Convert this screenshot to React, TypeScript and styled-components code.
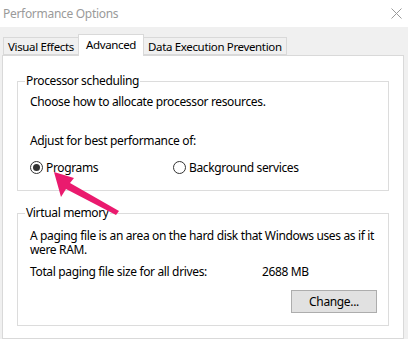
import React from "react";
import styled, { createGlobalStyle } from "styled-components";

const Global = createGlobalStyle`
  html, body { margin: 0; padding: 0; background: #f0f0f0; }
  body { font-family: "Noto Sans", "Open Sans", sans-serif; font-size: 12px; letter-spacing: -0.35px; color: #000; }
`;

const Window = styled.div`
  position: relative;
  width: 408px;
  height: 339px;
  overflow: hidden;
  background: #f0f0f0;
  display: flex;
  flex-direction: column;
`;

const TitleBar = styled.div`
  height: 27px;
  flex: none;
  background: #fff;
  display: flex;
  align-items: center;
  justify-content: space-between;
  padding: 0 6px 0 3px;
  color: #9a9a9a;
  font-size: 12px;
  letter-spacing: -0.3px;
`;

const CloseIcon = styled.svg`
  width: 11px;
  height: 11px;
`;

const TabStrip = styled.div`
  display: flex;
  align-items: flex-end;
  height: 21px;
  margin-top: 7px;
  padding-left: 3px;
  position: relative;
  z-index: 1;
`;

const Tab = styled.div<{ $active?: boolean }>`
  box-sizing: border-box;
  height: ${(p) => (p.$active ? "22px" : "18px")};
  margin-bottom: ${(p) => (p.$active ? "-1px" : "0")};
  padding: ${(p) => (p.$active ? "2px 7px 0" : "1px 4px 0 4px")};
  border: 1px solid #d9d9d9;
  border-bottom: ${(p) => (p.$active ? "none" : "1px solid #d9d9d9")};
  background: ${(p) => (p.$active ? "#fff" : "#f0f0f0")};
  margin-left: ${(p) => (p.$active ? "-1px" : "0")};
  margin-right: ${(p) => (p.$active ? "-1px" : "0")};
  position: relative;
  z-index: ${(p) => (p.$active ? 2 : 1)};
  font-size: 11.5px;
  line-height: 15px;
  white-space: nowrap;
`;

const Panel = styled.div`
  margin: 0 4px 0 2px;
  height: 320px;
  background: #fff;
  border: 1px solid #d9d9d9;
  padding: 17px 14px 0;
  display: flex;
  flex-direction: column;
  gap: 14px;
`;

const Group = styled.fieldset`
  margin: 0;
  padding: 0 12px;
  border: 1px solid #dcdcdc;
  min-width: 0;
`;

const Legend = styled.legend`
  margin-left: -5px;
  padding: 0 1px;
  line-height: 16px;
`;

const Line = styled.div<{ $mt?: number }>`
  line-height: 15px;
  margin-top: ${(p) => p.$mt ?? 0}px;
`;

const Paragraph = styled.div<{ $mt?: number }>`
  line-height: 14px;
  margin-top: ${(p) => p.$mt ?? 0}px;
`;

const RadioRow = styled.div`
  display: grid;
  grid-template-columns: 143px auto;
  margin: 12px 0 15px;
  line-height: 15px;
`;

const RadioLabel = styled.label`
  display: flex;
  align-items: center;
  gap: 3px;
`;

const RadioCircle = styled.span<{ $checked?: boolean }>`
  box-sizing: border-box;
  width: 13px;
  height: 13px;
  border-radius: 50%;
  border: 1px solid #333;
  display: flex;
  align-items: center;
  justify-content: center;
  background: #fff;
  &::after {
    content: "";
    width: 7px;
    height: 7px;
    border-radius: 50%;
    background: #333;
    display: ${(p) => (p.$checked ? "block" : "none")};
  }
`;

const SizeRow = styled.div`
  display: grid;
  grid-template-columns: 232px auto;
  line-height: 14px;
  margin-top: 8px;
`;

const ButtonRow = styled.div`
  display: flex;
  justify-content: flex-end;
  margin: 11px -1px 12px 0;
`;

const Button = styled.button`
  box-sizing: border-box;
  width: 86px;
  height: 23px;
  background: #e1e1e1;
  border: 1px solid #adadad;
  font: inherit;
  letter-spacing: inherit;
  color: #000;
  padding: 0;
`;

const ArrowSvg = styled.svg`
  position: absolute;
  left: 0;
  top: 0;
  pointer-events: none;
`;

export default function App() {
  return (
    <>
      <Global />
      <Window>
        <TitleBar>
          <span>Performance Options</span>
          <CloseIcon viewBox="0 0 11 11">
            <path d="M0.5 0.5 L10.5 10.5 M10.5 0.5 L0.5 10.5" stroke="#9a9a9a" strokeWidth="1" />
          </CloseIcon>
        </TitleBar>
        <TabStrip>
          <Tab>Visual Effects</Tab>
          <Tab $active>Advanced</Tab>
          <Tab>Data Execution Prevention</Tab>
        </TabStrip>
        <Panel>
          <Group>
            <Legend>Processor scheduling</Legend>
            <Line $mt={5}>Choose how to allocate processor resources.</Line>
            <Line $mt={24}>Adjust for best performance of:</Line>
            <RadioRow>
              <RadioLabel>
                <RadioCircle $checked />
                Programs
              </RadioLabel>
              <RadioLabel>
                <RadioCircle />
                Background services
              </RadioLabel>
            </RadioRow>
          </Group>
          <Group>
            <Legend>Virtual memory</Legend>
            <Paragraph $mt={8}>
              A paging file is an area on the hard disk that Windows uses as if it
              were RAM.
            </Paragraph>
            <SizeRow>
              <span>Total paging file size for all drives:</span>
              <span>2688 MB</span>
            </SizeRow>
            <ButtonRow>
              <Button>Change...</Button>
            </ButtonRow>
          </Group>
        </Panel>
        <ArrowSvg width="408" height="339" viewBox="0 0 408 339">
          <polygon
            points="54,172 61,197 66,189 116,215 119,211 70,183 74,178"
            fill="#ea1a6e"
          />
        </ArrowSvg>
      </Window>
    </>
  );
}
